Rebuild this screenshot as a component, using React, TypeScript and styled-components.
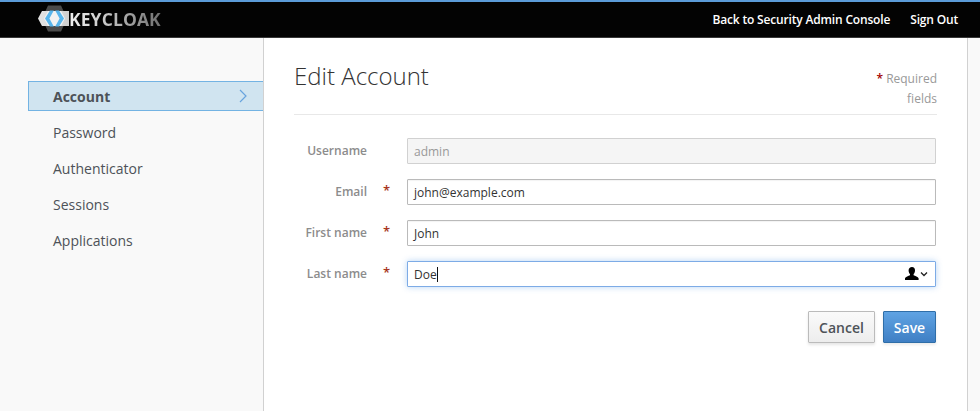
import React from "react";
import styled, { createGlobalStyle } from "styled-components";

const Global = createGlobalStyle`
  html, body { margin: 0; padding: 0; height: 100%; overflow: hidden; background: #f9f9f9; }
  body { font-family: "Open Sans", "Liberation Sans", sans-serif; font-size: 13px; color: #333; }
  * { box-sizing: border-box; }
`;

const Page = styled.div`
  width: 980px;
  height: 411px;
  display: flex;
  flex-direction: column;
  overflow: hidden;
`;

const Header = styled.header`
  height: 38px;
  flex: none;
  background: #030303;
  border-top: 2px solid #5b9bd8;
  border-bottom: 1px solid #383838;
  display: flex;
  align-items: center;
  justify-content: space-between;
  padding: 0 22px 0 38px;
`;

const Brand = styled.div`
  display: flex;
  align-items: center;
  gap: 0;
  margin-top: -2px;
`;

const LogoMark = styled.svg`
  width: 31px;
  height: 28px;
  flex: none;
`;

const BrandText = styled.span`
  font-family: "Open Sans", sans-serif;
  font-size: 17.5px;
  font-weight: 700;
  letter-spacing: 0.1px;
  line-height: 20px;
  background: linear-gradient(90deg, #f0f0f0 0%, #c8c8c8 40%, #6e6e6e 100%);
  -webkit-background-clip: text;
  background-clip: text;
  color: transparent;
`;

const TopNav = styled.nav`
  display: flex;
  gap: 20px;
`;

const TopLink = styled.a`
  color: #fff;
  font-size: 12px;
  font-weight: 600;
  line-height: 18px;
  letter-spacing: -0.17px;
`;

const Body = styled.div`
  flex: 1;
  display: flex;
`;

const Sidebar = styled.aside`
  width: 263px;
  flex: none;
  background: #f9f9f9;
  padding-top: 43px;
`;

const NavItem = styled.div<{ $active?: boolean }>`
  height: 30px;
  margin-bottom: 6px;
  margin-left: 28px;
  padding-left: 24px;
  display: flex;
  align-items: center;
  justify-content: space-between;
  font-size: 14px;
  color: #4d5258;
  font-weight: ${(p) => (p.$active ? 700 : 400)};
  background: ${(p) => (p.$active ? "#d0e4f0" : "transparent")};
  border: 1px solid ${(p) => (p.$active ? "#73b3e3" : "transparent")};
  border-right: none;
`;

const Chevron = styled.svg`
  width: 10px;
  height: 14px;
  margin-right: 15px;
  fill: none;
  stroke: #68a4de;
  stroke-width: 1.2;
`;

const Main = styled.main`
  width: 705px;
  flex: none;
  background: #fff;
  border-left: 1px solid #d1d1d1;
  border-right: 1px solid #d1d1d1;
  padding: 0 30px 0 30px;
`;

const TitleRow = styled.div`
  height: 77px;
  display: flex;
  justify-content: space-between;
  border-bottom: 1px solid #e8e8e8;
`;

const Title = styled.h2`
  margin: 21px 0 0;
  font-size: 24px;
  font-weight: 300;
  line-height: 33px;
  color: #333;
`;

const Required = styled.div`
  width: 70px;
  margin-top: 31px;
  text-align: right;
  font-size: 12px;
  line-height: 20px;
  color: #999;
`;

const Star = styled.span`
  color: #a30000;
  font-weight: 600;
`;

const Form = styled.form`
  margin-top: 23px;
  display: flex;
  flex-direction: column;
  gap: 15px;
`;

const Row = styled.div`
  display: flex;
  align-items: center;
  height: 26px;
`;

const Label = styled.label`
  width: 73px;
  margin-top: -2px;
  text-align: right;
  font-size: 12px;
  font-weight: 600;
  color: #8c8c8c;
  white-space: nowrap;
  flex: none;
`;

const StarCell = styled.span`
  width: 40px;
  flex: none;
  padding-left: 16px;
  margin-top: -5px;
  font-size: 13px;
  line-height: 18px;
  color: #a8341c;
  font-weight: 600;
`;

const InputBox = styled.div<{ $state?: "disabled" | "focus" }>`
  width: 529px;
  height: 26px;
  display: flex;
  align-items: center;
  justify-content: space-between;
  padding: 0 6px 0 6px;
  font-size: 12px;
  color: ${(p) => (p.$state === "disabled" ? "#999" : "#333")};
  background: ${(p) => (p.$state === "disabled" ? "#f5f5f5" : "#fff")};
  border: 1px solid ${(p) =>
    p.$state === "disabled" ? "#d1d1d1" : p.$state === "focus" ? "#7dabe6" : "#bababa"};
  border-radius: 1px;
  box-shadow: ${(p) =>
    p.$state === "focus"
      ? "0 0 6px rgba(96,160,230,.45)"
      : p.$state === "disabled"
      ? "none"
      : "inset 0 1px 1px rgba(0,0,0,.05)"};
`;

const Caret = styled.span`
  display: inline-block;
  width: 1px;
  height: 15px;
  background: #111;
  vertical-align: -3px;
`;

const FillIcon = styled.svg`
  width: 23px;
  height: 14px;
  margin-right: 1px;
`;

const Actions = styled.div`
  margin-top: 9px;
  margin-right: 1px;
  display: flex;
  justify-content: flex-end;
  gap: 8px;
`;

const Button = styled.button<{ $primary?: boolean }>`
  height: 32px;
  width: ${(p) => (p.$primary ? "53px" : "67px")};
  padding: 0;
  font-family: inherit;
  font-size: 14px;
  font-weight: 600;
  border-radius: 1px;
  color: ${(p) => (p.$primary ? "#fff" : "#4d5258")};
  border: 1px solid ${(p) => (p.$primary ? "#2f6ea8" : "#bbb")};
  background: ${(p) =>
    p.$primary
      ? "linear-gradient(#5fa3e3, #3f7fc4)"
      : "linear-gradient(#fafafa, #ededed)"};
  box-shadow: ${(p) => (p.$primary ? "0 2px 3px rgba(0,0,0,.08)" : "0 2px 3px rgba(0,0,0,.1)")};
`;

const Logo = () => (
  <LogoMark viewBox="0 0 31 28" aria-hidden="true">
    <defs>
      <linearGradient id="band" x1="0" y1="0" x2="1" y2="0">
        <stop offset="0" stopColor="#e4e4e4" />
        <stop offset="1" stopColor="#cfcfcf" />
      </linearGradient>
    </defs>
    <polygon points="10,0.5 23,0.5 29,13.5 23,26.5 10,26.5 4,13.5" fill="#4b4b4b" />
    <polygon points="0,13.5 4,6 31,6 31,21 4,21" fill="url(#band)" />
    <polygon points="10,6 23,6 27,13.5 23,21 10,21 6,13.5" fill="#f2f2f2" />
    <path d="M12 5.5h3.8L11.4 13.5l4.4 8H12L7 13.5z" fill="#58b5ec" />
    <path d="M21 5.5h-3.8l4.4 8-4.4 8H21l5-8z" fill="#58b5ec" />
  </LogoMark>
);

export default function App() {
  return (
    <Page>
      <Global />
      <Header>
        <Brand>
          <Logo />
          <BrandText>KEYCLOAK</BrandText>
        </Brand>
        <TopNav>
          <TopLink>Back to Security Admin Console</TopLink>
          <TopLink>Sign Out</TopLink>
        </TopNav>
      </Header>
      <Body>
        <Sidebar>
          <NavItem $active>
            Account
            <Chevron viewBox="0 0 10 14">
              <path d="M2 1l6 6-6 6" />
            </Chevron>
          </NavItem>
          <NavItem>Password</NavItem>
          <NavItem>Authenticator</NavItem>
          <NavItem>Sessions</NavItem>
          <NavItem>Applications</NavItem>
        </Sidebar>
        <Main>
          <TitleRow>
            <Title>Edit Account</Title>
            <Required>
              <Star>*</Star> Required fields
            </Required>
          </TitleRow>
          <Form>
            <Row>
              <Label>Username</Label>
              <StarCell />
              <InputBox $state="disabled">admin</InputBox>
            </Row>
            <Row>
              <Label>Email</Label>
              <StarCell>*</StarCell>
              <InputBox>john@example.com</InputBox>
            </Row>
            <Row>
              <Label>First name</Label>
              <StarCell>*</StarCell>
              <InputBox>John</InputBox>
            </Row>
            <Row>
              <Label>Last name</Label>
              <StarCell>*</StarCell>
              <InputBox $state="focus">
                <span>
                  Doe
                  <Caret />
                </span>
                <FillIcon viewBox="0 0 23 14">
                  <path d="M7 0c2 0 3 1.4 3 3.4 0 1.5-.6 2.8-1.4 3.6v1.2c1.6.9 4.4 1.3 5 3V13H0v-1.8c.6-1.7 3.4-2.1 5-3V7c-.8-.8-1.4-2.1-1.4-3.6C3.6 1.4 5 0 7 0z" fill="#000" />
                  <path d="M16 5.5l3 3 3-3" fill="none" stroke="#222" strokeWidth="1.3" />
                </FillIcon>
              </InputBox>
            </Row>
            <Actions>
              <Button type="button">Cancel</Button>
              <Button type="button" $primary>Save</Button>
            </Actions>
          </Form>
        </Main>
      </Body>
    </Page>
  );
}
